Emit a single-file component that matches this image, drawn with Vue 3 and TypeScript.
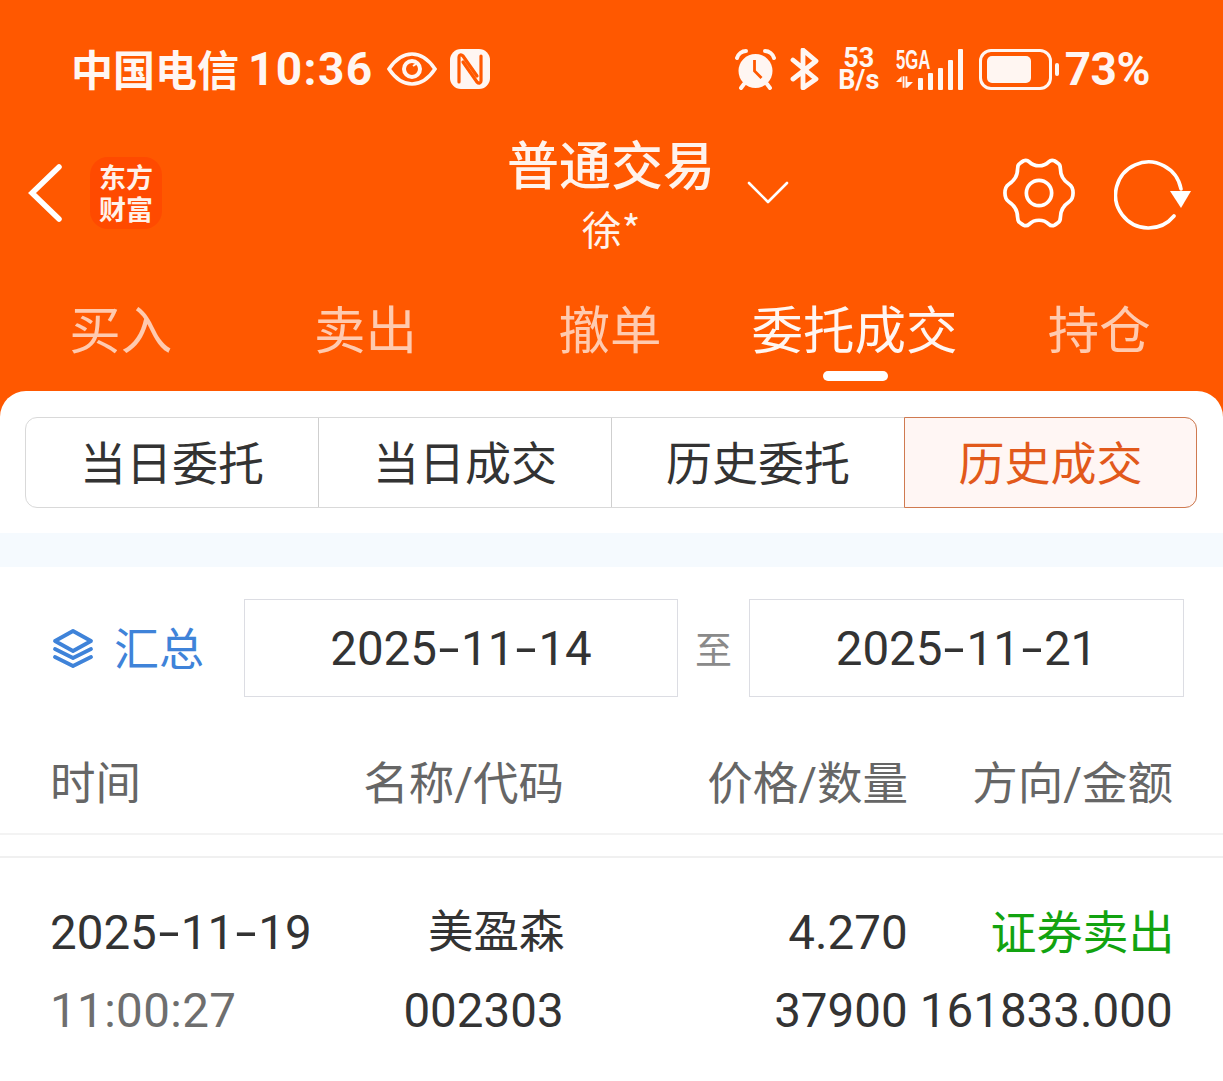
<script setup lang="ts">
const tabs: string[] = ['买入', '卖出', '撤单', '委托成交', '持仓']
const segs: string[] = ['当日委托', '当日成交', '历史委托', '历史成交']
const dateParts = (d: string): string[] => d.split('-')
</script>

<template>
  <div class="page">
    <header class="top">
      <div class="status">
        <div class="status-left">
          <span class="carrier">中国电信</span>
          <span class="clock">10:36</span>
          <svg class="eye" viewBox="0 0 50 36" width="50" height="36" fill="none" stroke="#fff6f2">
            <path d="M2 18C10 6 18 3 25 3s15 3 23 15c-8 12-16 15-23 15S10 30 2 18Z" stroke-width="3.6" />
            <circle cx="25" cy="18" r="8" stroke-width="4" />
            <path d="M26 15l3-2" stroke-width="2" />
          </svg>
          <svg class="nfc" viewBox="0 0 42 42" width="42" height="42">
            <rect x="1" y="1" width="40" height="40" rx="11" fill="#fff6f2" />
            <path d="M10 34V9c0-2 2-3 4-1l14 20M32 8v25c0 2-2 3-4 1L14 14" fill="none" stroke="#ff5800" stroke-width="3.200" stroke-linecap="round" stroke-linejoin="round" />
          </svg>
        </div>
        <div class="status-right">
          <svg class="alarm" viewBox="0 0 42 42" width="42" height="42">
            <circle cx="20.500" cy="23" r="17" fill="#fff6f2" />
            <path d="M19.500 12v11l7 7" fill="none" stroke="#ff5800" stroke-width="2.800" />
            <path d="M2 10C3 6 7 3 11 3M39 10C38 6 34 3 30 3" fill="none" stroke="#fff6f2" stroke-width="4" stroke-linecap="round" />
            <path d="M9 36l-3 4M32 36l3 4" stroke="#fff6f2" stroke-width="4" stroke-linecap="round" />
          </svg>
          <svg class="bt" viewBox="0 0 30 42" width="30" height="42" fill="none" stroke="#fff6f2" stroke-width="4.800" stroke-linejoin="round" stroke-linecap="round">
            <path d="M3 12l23 19-13 9V2l13 11L3 31" />
          </svg>
          <div class="speed"><span>53</span><span>B/s</span></div>
          <div class="net">
            <div class="net-text">
              <span class="five">5GA</span>
              <svg viewBox="0 0 18 14" width="17" height="14" fill="#fff6f2"><path d="M0 7l6-6v6zM7 1h2v12H7zM10 1h2v12h-2zM12 7h6l-6 6z" /></svg>
            </div>
            <div class="bars">
              <i class="b1"></i><i class="b2"></i><i class="b3"></i><i class="b4"></i><i class="b5"></i>
            </div>
          </div>
          <div class="battery">
            <div class="cell"><div class="fill"></div></div>
            <div class="cap"></div>
          </div>
          <span class="pct">73%</span>
        </div>
      </div>

      <div class="nav">
        <svg class="back" viewBox="0 0 38 60" width="38" height="60" fill="none" stroke="#fff" stroke-width="5.500" stroke-linecap="round">
          <path d="M33 4L6 30l27 26" />
        </svg>
        <div class="logo"><span>东方</span><span>财富</span></div>
        <div class="title">
          <div class="title-main">普通交易</div>
          <div class="title-sub">徐*</div>
        </div>
        <svg class="chev" viewBox="0 0 42 26" width="42" height="26" fill="none" stroke="#fff" stroke-width="2.600" stroke-linecap="round" stroke-linejoin="round">
          <path d="M2 3l19 19L40 3" />
        </svg>
        <svg class="gear" viewBox="0 0 74 74" width="72" height="72" fill="none" stroke="#fff" stroke-width="3.800" stroke-linejoin="round">
          <path d="M37 9C41 9 44 8 47 5C49 3 51 3 53 4L56 6C58 7 59 9 59 12C59 18 62 24 68 28C71 30 72 33 72 37C72 41 71 44 68 46C62 50 59 56 59 62C59 65 58 67 56 68L53 70C51 71 49 71 47 69C44 66 41 65 37 65C33 65 30 66 27 69C25 71 23 71 21 70L18 68C16 67 15 65 15 62C15 56 12 50 6 46C3 44 2 41 2 37C2 33 3 30 6 28C12 24 15 18 15 12C15 9 16 7 18 6L21 4C23 3 25 3 27 5C30 8 33 9 37 9Z" />
          <circle cx="37" cy="37" r="13" />
        </svg>
        <svg class="refresh" viewBox="0 0 78 72" width="78" height="72" fill="none">
          <path d="M60 58A33 33 0 1 1 67 31" stroke="#fff" stroke-width="3.600" stroke-linecap="round" />
          <path d="M56 33h21l-10 17Z" fill="#fff" />
        </svg>
      </div>

      <nav class="tabs">
        <div v-for="t in tabs" :key="t" class="tab" :class="{ on: t === '委托成交' }">{{ t }}</div>
      </nav>
    </header>

    <main class="sheet">
      <div class="segs">
        <div v-for="s in segs" :key="s" class="seg" :class="{ on: s === '历史成交' }">{{ s }}</div>
      </div>
      <div class="band"></div>

      <div class="filter">
        <div class="sum">
          <svg viewBox="0 0 42 40" width="42" height="40" fill="none" stroke="#3f83d9" stroke-width="3.800" stroke-linecap="round" stroke-linejoin="round">
            <path d="M21 3l18 10-18 10L3 13Z" />
            <path d="M3 21l18 9 18-9" />
            <path d="M3 29l18 9 18-9" />
          </svg>
          <span>汇总</span>
        </div>
        <div class="date">
          <template v-for="(p, i) in dateParts('2025-11-14')" :key="i"><span v-if="i" class="dash">-</span>{{ p }}</template>
        </div>
        <span class="to">至</span>
        <div class="date">
          <template v-for="(p, i) in dateParts('2025-11-21')" :key="i"><span v-if="i" class="dash">-</span>{{ p }}</template>
        </div>
      </div>

      <div class="grid head">
        <div class="l">时间</div>
        <div>名称/代码</div>
        <div>价格/数量</div>
        <div>方向/金额</div>
      </div>
      <div class="gap"></div>
      <div class="grid row">
        <div class="l">
          <template v-for="(p, i) in dateParts('2025-11-19')" :key="i"><span v-if="i" class="dash">-</span>{{ p }}</template>
        </div>
        <div class="name">美盈森</div>
        <div class="num">4.270</div>
        <div class="green">证券卖出</div>
        <div class="l muted">11:00:27</div>
        <div class="num">002303</div>
        <div class="num">37900</div>
        <div class="num">161833.000</div>
      </div>
    </main>
  </div>
</template>

<style scoped>
.page {
  width: 1223px;
  height: 1081px;
  overflow: hidden;
  background: #fff;
  font-family: Roboto, "Noto Sans CJK SC", sans-serif;
  color: #333;
}
.top {
  background: #ff5800;
  height: 417px;
  color: #fff6f2;
  display: flex;
  flex-direction: column;
}
.status {
  height: 138px;
  flex: none;
  padding: 0 73px 0 71px;
  display: flex;
  justify-content: space-between;
  align-items: center;
}
.status-left, .status-right { display: flex; align-items: center; }
.carrier { font-size: 42px; font-weight: 700; font-family: "Noto Sans CJK SC", sans-serif; margin-bottom: 4px; }
.clock { font-size: 46px; font-weight: 700; margin-left: 9px; letter-spacing: 1.400px; }
.eye { margin-left: 13px; }
.nfc { margin-left: 12px; }
.bt { margin-left: 13px; }
.speed {
  margin-left: 17px;
  width: 44px;
  display: flex;
  flex-direction: column;
  align-items: center;
  font: 700 27px/22px Roboto, sans-serif;
}
.net { margin-left: 15px; display: flex; align-items: flex-end; height: 42px; }
.net-text { display: flex; flex-direction: column; align-items: flex-start; width: 22px; }
.five { font: 700 27px/24px "Liberation Sans", sans-serif; transform: scaleX(.62); transform-origin: left; width: 22px; white-space: nowrap; }
.net-text svg { margin-bottom: 1px; margin-top: 3px; }
.bars { display: flex; align-items: flex-end; gap: 5px; height: 42px; }
.bars i { display: block; width: 5px; background: #fff6f2; border-radius: 1px; }
.bars .b1 { height: 12px; }
.bars .b2 { height: 17px; }
.bars .b3 { height: 22px; }
.bars .b4 { height: 30px; }
.bars .b5 { height: 41px; }
.battery { margin-left: 16px; display: flex; align-items: center; }
.cell {
  width: 73px;
  height: 41px;
  border: 3px solid #fff6f2;
  border-radius: 12px;
  padding: 4px 5px;
  box-sizing: border-box;
}
.fill { width: 44px; height: 100%; background: #fff6f2; border-radius: 5px; }
.cap { width: 4px; height: 13px; background: #fff6f2; border-radius: 2px; margin-left: 3px; }
.pct { font-size: 46px; font-weight: 700; margin-left: 6px; letter-spacing: -.5px; }

.nav {
  height: 112px;
  flex: none;
  position: relative;
  display: flex;
  align-items: center;
  padding-left: 26px;
}
.back { flex: none; margin-top: -2px; }
.logo {
  margin-left: 26px;
  width: 72px;
  height: 72px;
  border-radius: 18px;
  background: #ff4a00;
  display: flex;
  flex-direction: column;
  align-items: center;
  justify-content: center;
  font: 700 27px/32px "Noto Sans CJK SC", sans-serif;
  color: #fff2ea;
  margin-top: -2px;
}
.logo span { display: block; }
.title {
  margin-left: 345px;
  margin-bottom: 2px;
  width: 208px;
  text-align: center;
  color: #fff3ec;
  font-family: "Noto Sans CJK SC", sans-serif;
  white-space: nowrap;
}
.title-main { font-size: 52px; line-height: 60px; font-weight: 500; }
.title-sub { font-size: 40px; line-height: 50px; margin-top: 10px; }
.chev { margin-left: 32px; margin-top: -2px; }
.gear { position: absolute; left: 1003px; top: 19px; }
.refresh { position: absolute; left: 1114px; top: 20px; }

.tabs {
  display: grid;
  grid-template-columns: repeat(5, 1fr);
  height: 141px;
  padding-top: 21px;
  margin: 0 1.500px 0 -1.500px;
  box-sizing: border-box;
  font-family: "Noto Sans CJK SC", sans-serif;
}
.tab {
  position: relative;
  text-align: center;
  font-size: 51.500px;
  line-height: 112px;
  color: rgba(255, 246, 242, .72);
}
.tab.on { color: #fff6f2; }
.tab.on::after {
  content: "";
  position: absolute;
  left: 50%;
  margin-left: -32px;
  top: 100px;
  width: 65px;
  height: 10px;
  border-radius: 5px;
  background: #fff;
}

.sheet {
  margin-top: -26px;
  background: #fff;
  position: relative;
  border-radius: 26px 26px 0 0;
  padding-top: 26px;
}
.segs {
  margin: 0 26px 0 25px;
  display: grid;
  grid-template-columns: 293px 293px 293px 1fr;
  height: 91px;
  border: 1px solid #d9d9d9;
  border-radius: 12px;
  box-sizing: border-box;
}
.seg {
  text-align: center;
  font: 46px/85px "Noto Sans CJK SC", sans-serif;
  color: #333;
  border-right: 1px solid #cfcfcf;
}
.seg:last-child { border-right: 0; }
.seg.on {
  margin: -1px -1px -1px -1px;
  background: #fff6f4;
  color: #e2591b;
  border: 1px solid #d07a50;
  border-radius: 0 12px 12px 0;
}
.band { height: 34px; margin-top: 25px; background: #f5fafe; }

.filter {
  display: grid;
  grid-template-columns: 192px 434px 71px 435px;
  align-items: center;
  height: 98px;
  margin-top: 32px;
  padding-left: 52px;
}
.sum {
  display: flex;
  align-items: center;
  color: #3f83d9;
  font: 45px "Noto Sans CJK SC", sans-serif;
}
.sum span { margin-left: 20px; line-height: 52px; margin-top: -2px; }
.date {
  height: 98px;
  border: 1px solid #dcdde3;
  box-sizing: border-box;
  text-align: center;
  font-size: 47.500px;
  line-height: 98px;
  color: #333;
}
.dash {
  display: inline-block;
  width: 24px;
  text-align: center;
  transform: scaleX(1.6);
}
.to {
  text-align: center;
  font: 37px "Noto Sans CJK SC", sans-serif;
  color: #8a8a8a;
}

.grid {
  display: grid;
  grid-template-columns: 1fr 254px 344px 265px;
  padding: 0 50px;
  font-size: 47.500px;
  text-align: right;
}
.l { text-align: left; }
.head {
  height: 138px;
  line-height: 176px;
  color: #666;
  box-sizing: border-box;
  border-bottom: 2px solid #f3f3f3;
  font-size: 45.500px;
}
.gap { height: 21px; border-bottom: 2px solid #f0f0f0; }
.row {
  padding-top: 36px;
  line-height: 78px;
  white-space: nowrap;
}
.num { padding-right: 2px; }
.name { font-size: 45.500px; padding-right: 1px; }
.muted { color: #6e6e6e; letter-spacing: .4px; }
.green { color: #12a310; font-size: 46px; }
</style>
